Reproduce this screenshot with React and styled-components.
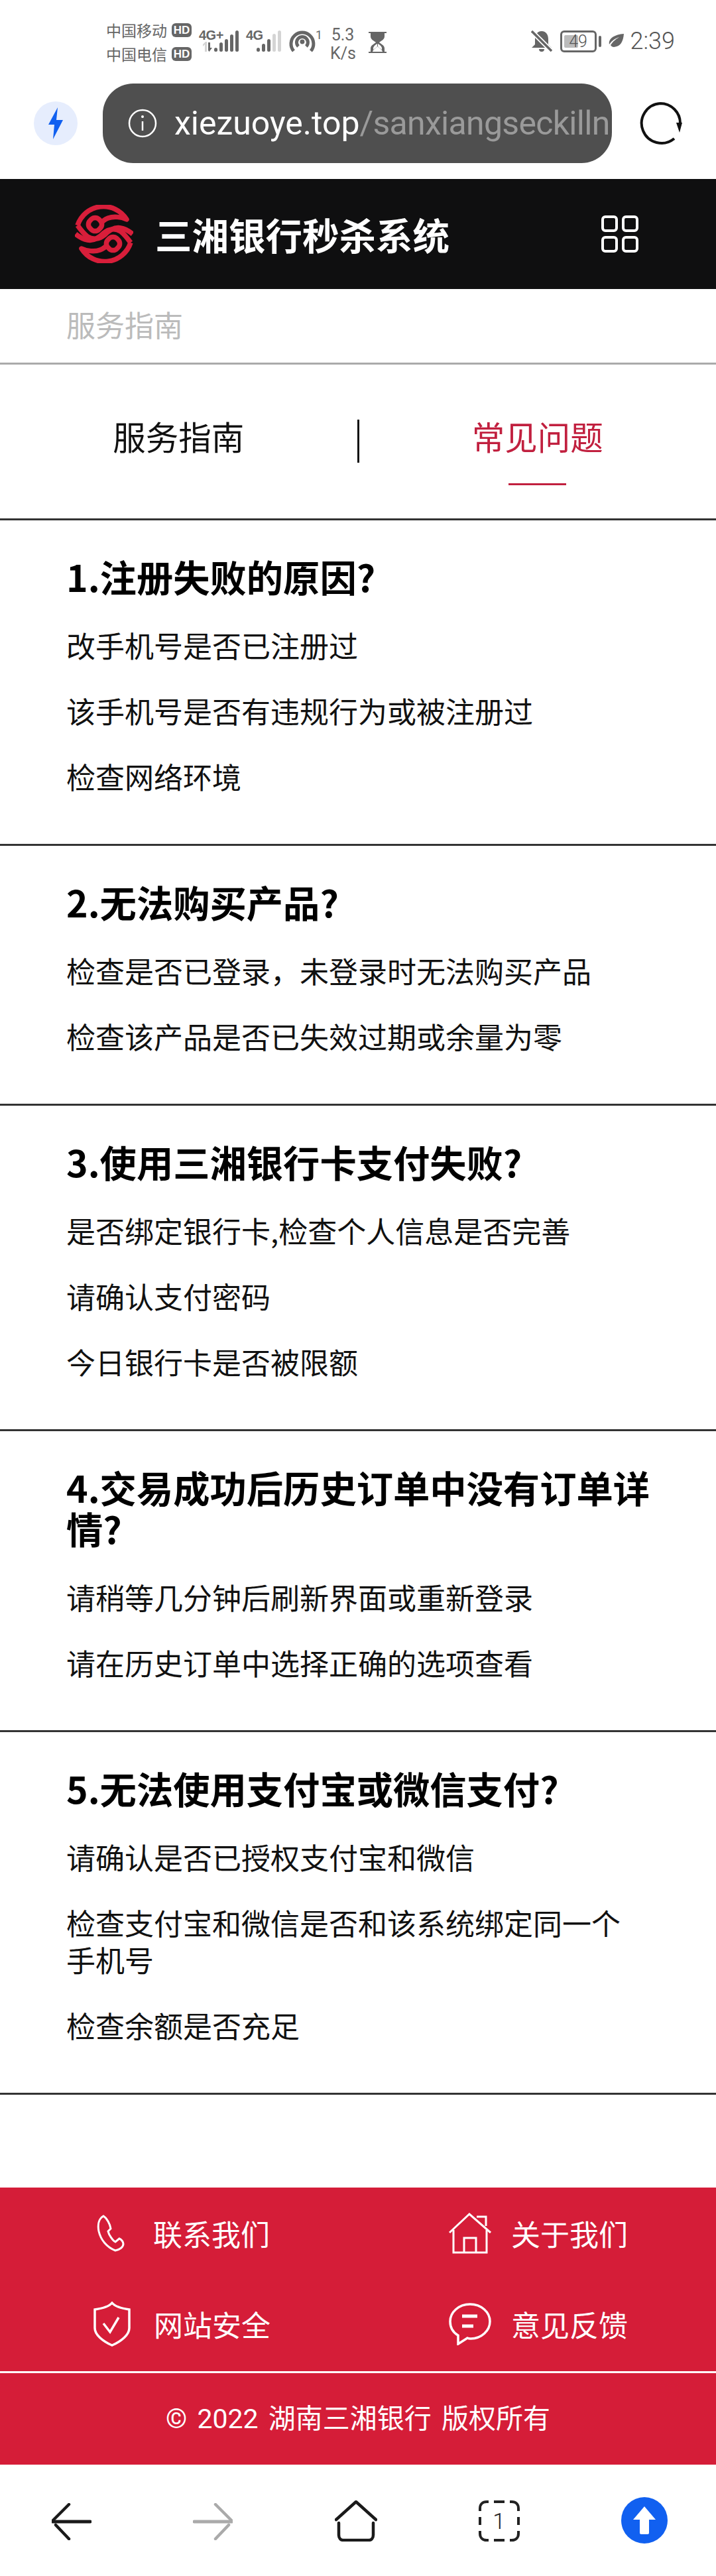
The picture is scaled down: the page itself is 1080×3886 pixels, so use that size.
import styled, { createGlobalStyle } from "styled-components";

const GlobalStyle = createGlobalStyle`
    html, body {
        margin: 0;
        padding: 0;
        background: #fff;
    }
    * {
        box-sizing: border-box;
    }
    body {
        font-family: "Noto Sans CJK SC", "Noto Sans", sans-serif;
    }
`

const Page = styled.div`
    width: 1080px;
    height: 3886px;
    display: flex;
    flex-direction: column;
    overflow: hidden;
`

/* phone status bar */
const StatusBar = styled.div`
    height: 108px;
    padding: 33px 62px 0 160px;
    display: flex;
    align-items: flex-start;
    color: #666;
    flex-shrink: 0;
`
const Carriers = styled.div`
    width: 140px;
    display: flex;
    flex-direction: column;
    gap: 12px;
    flex-shrink: 0;
`
const Carrier = styled.div`
    height: 24px;
    display: flex;
    align-items: center;
    gap: 7px;
    font-size: 23px;
    line-height: 24px;
    white-space: nowrap;
`
const HdBadge = styled.span`
    width: 30px;
    height: 21px;
    border-radius: 6px;
    background: #666;
    color: #fff;
    font-family: "Liberation Sans", sans-serif;
    font-size: 17px;
    font-weight: 700;
    line-height: 21px;
    text-align: center;
`
const Signal = styled.div`
    position: relative;
    width: ${(p) => p.$width}px;
    height: 33px;
    margin: 12px ${(p) => p.$gap}px 0 0;
    flex-shrink: 0;
`
const SignalLabel = styled.span`
    position: absolute;
    left: 0;
    top: -2px;
    font-family: "Liberation Sans Narrow", "Liberation Sans", sans-serif;
    font-size: 20px;
    font-weight: 700;
    line-height: 20px;
    letter-spacing: -0.5px;
`
const Bars = styled.div`
    position: absolute;
    right: 0;
    bottom: 0;
    display: flex;
    align-items: flex-end;
    gap: 3px;
`
const Bar = styled.i`
    display: block;
    width: 5px;
    height: ${(p) => p.$h}px;
    border-radius: 2.5px;
    background: ${(p) => (p.$off ? "#d4d4d4" : "#666")};
`
const Hotspot = styled.div`
    width: 50px;
    margin: 12px 12px 0 0;
    display: flex;
    flex-shrink: 0;
    font-family: "Roboto", sans-serif;
    font-size: 18px;
    line-height: 16px;
`
const Speed = styled.div`
    width: 38px;
    margin: 6px 20px 0 0;
    flex-shrink: 0;
    font-family: "Roboto", sans-serif;
    font-size: 25px;
    line-height: 28px;
    text-align: center;
    white-space: nowrap;
`
const StatusRight = styled.div`
    margin: 12px 0 0 auto;
    display: flex;
    align-items: center;
    height: 34px;
`
const Battery = styled.div`
    position: relative;
    width: 55px;
    height: 33px;
    margin: 0 4px 0 12px;
    border: 3px solid #666;
    border-radius: 6px;
    font-family: "Roboto", sans-serif;
    font-size: 25px;
    font-weight: 300;
    line-height: 27px;
    text-align: center;
    color: #555;
    &::before {
        content: "";
        position: absolute;
        left: 3px;
        top: 4px;
        width: 21px;
        height: 19px;
        border-radius: 2px;
        background: #bbb;
    }
    &::after {
        content: "";
        position: absolute;
        right: -10px;
        top: 5px;
        width: 4px;
        height: 17px;
        border-radius: 2px;
        background: #666;
    }
    span {
        position: relative;
    }
`
const Time = styled.div`
    margin-left: 9px;
    font-family: "Roboto", sans-serif;
    font-size: 36px;
    font-weight: 300;
    line-height: 34px;
    color: #555;
`

/* browser address row */
const AddressRow = styled.div`
    height: 162px;
    padding: 18px 51px 18px;
    display: flex;
    align-items: flex-start;
    flex-shrink: 0;
`
const FlashButton = styled.div`
    width: 66px;
    height: 66px;
    margin-top: 27px;
    border-radius: 50%;
    background: #e6edfd;
    display: flex;
    align-items: center;
    justify-content: center;
    flex-shrink: 0;
`
const UrlPill = styled.div`
    width: 768px;
    height: 120px;
    margin-left: 38px;
    padding: 0 22px 0 38px;
    border-radius: 46px;
    background: #4f4f4f;
    display: flex;
    align-items: center;
    flex-shrink: 0;
`
const UrlText = styled.div`
    margin-left: 26px;
    white-space: nowrap;
    font-family: "Roboto", sans-serif;
    font-size: 50px;
    line-height: 70px;
    color: #fff;
    span {
        color: #9a9a9a;
        letter-spacing: -0.7px;
    }
`
const ReloadButton = styled.div`
    width: 66px;
    height: 66px;
    margin: 27px 0 0 40px;
    flex-shrink: 0;
`

/* site header */
const SiteHeader = styled.header`
    height: 166px;
    padding: 39px 117px 0 113px;
    background: #0f0f10;
    display: flex;
    align-items: flex-start;
    flex-shrink: 0;
`
const SiteTitle = styled.h1`
    margin: 12px 0 0 33px;
    font-size: 55.5px;
    font-weight: 700;
    line-height: 64px;
    color: #fff;
    white-space: nowrap;
`
const MenuIcon = styled.div`
    margin: 16px 0 0 auto;
    display: grid;
    grid-template-columns: 25px 25px;
    grid-auto-rows: 25px;
    gap: 6px;
`
const MenuCell = styled.i`
    display: block;
    border: 4px solid #fff;
    border-radius: 6px;
`

const Crumb = styled.div`
    height: 114px;
    padding: 27px 0 0 100px;
    border-bottom: 3px solid #aaa;
    font-size: 44px;
    line-height: 52px;
    color: #bbb;
    flex-shrink: 0;
`

const Tabs = styled.nav`
    height: 235px;
    padding-top: 79px;
    display: flex;
    align-items: flex-start;
    border-bottom: 3px solid #333;
    flex-shrink: 0;
`
const Tab = styled.div`
    flex: 1;
    display: flex;
    flex-direction: column;
    align-items: center;
    font-size: 49.5px;
    line-height: 58px;
    color: ${(p) => (p.$active ? "#c1203f" : "#111")};
    &::after {
        content: "";
        display: ${(p) => (p.$active ? "block" : "none")};
        width: 87px;
        height: 3px;
        margin-top: 42px;
        background: #c1203f;
    }
`
const TabDivider = styled.div`
    width: 3px;
    height: 65px;
    margin-top: 4px;
    background: #111;
    flex-shrink: 0;
`

const Faq = styled.section`
    padding: 53px 80px 31px 100px;
    border-bottom: 3px solid #333;
    flex-shrink: 0;
`
const Question = styled.h2`
    margin: 0 0 45px;
    font-size: 55.3px;
    font-weight: 700;
    line-height: 62px;
    color: #000;
`
const Answer = styled.p`
    max-width: 860px;
    margin: 0 0 43px;
    font-size: 44px;
    font-weight: 400;
    line-height: 56px;
    color: #111;
`

const Spacer = styled.div`
    flex: 1;
`

const Footer = styled.footer`
    background: #d51d38;
    color: #fff;
    flex-shrink: 0;
`
const FooterGrid = styled.div`
    height: 280px;
    padding-top: 34px;
    display: grid;
    grid-template-columns: 540px 540px;
    grid-auto-rows: 105px;
    row-gap: 32px;
    border-bottom: 3px solid #fff;
`
const FooterLink = styled.a`
    height: 70px;
    padding-left: ${(p) => p.$left}px;
    display: flex;
    align-items: center;
    font-size: 44px;
    line-height: 60px;
    color: #fff;
`
const LinkIcon = styled.span`
    width: ${(p) => p.$width}px;
    display: flex;
    flex-shrink: 0;
`
const Copyright = styled.div`
    height: 138px;
    display: flex;
    align-items: center;
    justify-content: center;
    font-family: "Roboto", "Noto Sans CJK SC", sans-serif;
    font-size: 41px;
    line-height: 60px;
    word-spacing: 5px;
`

const BottomBar = styled.div`
    height: 168px;
    padding: 58px 73px 0 78px;
    display: flex;
    align-items: flex-start;
    justify-content: space-between;
    flex-shrink: 0;
`
const TabCount = styled.div`
    position: relative;
    width: 62px;
    height: 62px;
    margin-top: -4px;
    font-family: "Roboto", sans-serif;
    font-size: 34px;
    font-weight: 300;
    line-height: 62px;
    text-align: center;
    color: #222;
    svg {
        position: absolute;
        left: 0;
        top: 0;
    }
`

const LogoBand = () => (
    <g fill="none" stroke="#d81e3a" strokeWidth="7.5" strokeLinejoin="round">
        <path d="M4 31 A41 41 0 0 1 78 22 C70 18 58 17 50 20 C45 22 42 24 39 28" />
        <path d="M4 31 C9 38 14 44 19 48 C27 53 37 52 44 46 C52 38 60 33 69 35 C76 36 82 40 87 44" />
        <rect x="21" y="20" width="19" height="19" rx="8" transform="rotate(45 30.5 29.5)" />
    </g>
)

const Logo = () => (
    <svg width="88" height="88" viewBox="0 0 88 88">
        <LogoBand />
        <g transform="rotate(180 44 44)">
            <LogoBand />
        </g>
    </svg>
)

const faqs = [
    {
        q: "1.注册失败的原因?",
        a: ["改手机号是否已注册过", "该手机号是否有违规行为或被注册过", "检查网络环境"],
    },
    {
        q: "2.无法购买产品?",
        a: ["检查是否已登录，未登录时无法购买产品", "检查该产品是否已失效过期或余量为零"],
    },
    {
        q: "3.使用三湘银行卡支付失败?",
        a: ["是否绑定银行卡,检查个人信息是否完善", "请确认支付密码", "今日银行卡是否被限额"],
    },
    {
        q: "4.交易成功后历史订单中没有订单详情?",
        a: ["请稍等几分钟后刷新界面或重新登录", "请在历史订单中选择正确的选项查看"],
    },
    {
        q: "5.无法使用支付宝或微信支付?",
        a: ["请确认是否已授权支付宝和微信", "检查支付宝和微信是否和该系统绑定同一个手机号", "检查余额是否充足"],
    },
]

const App = () => {
    return (
        <Page>
            <GlobalStyle />
            <StatusBar>
                <Carriers>
                    <Carrier>中国移动<HdBadge>HD</HdBadge></Carrier>
                    <Carrier>中国电信<HdBadge>HD</HdBadge></Carrier>
                </Carriers>
                <Signal $width={60} $gap={11}>
                    <SignalLabel>4G+</SignalLabel>
                    <Bars>
                        <svg width="14" height="15" viewBox="0 0 14 15">
                            <path d="M3 15V4L0 7V4L4 0H6V15Z" fill="#d4d4d4" />
                            <path d="M8 1H11V9H14L9.5 15L8 13Z" fill="#666" />
                        </svg>
                        <Bar $h={6} />
                        <Bar $h={14} />
                        <Bar $h={19} />
                        <Bar $h={26} />
                        <Bar $h={32} />
                    </Bars>
                </Signal>
                <Signal $width={53} $gap={12}>
                    <SignalLabel>4G</SignalLabel>
                    <Bars>
                        <Bar $h={6} />
                        <Bar $h={12} />
                        <Bar $h={19} />
                        <Bar $h={27} $off />
                        <Bar $h={32} $off />
                    </Bars>
                </Signal>
                <Hotspot>
                    <svg width="40" height="34" viewBox="0 0 40 34" fill="none" stroke="#666" strokeWidth="5">
                        <path d="M7 32 A17 17 0 1 1 33 32" />
                        <path d="M14 25 A8.5 8.5 0 1 1 26 25" />
                        <circle cx="20" cy="18" r="3.5" fill="#666" stroke="none" />
                    </svg>
                    1
                </Hotspot>
                <Speed>5.3<br />K/s</Speed>
                <svg width="27" height="32" viewBox="0 0 27 32" style={{ marginTop: 15 }} fill="#666">
                    <path d="M0 0H27V2H24V7C24 12 18 14 16 16C18 18 24 20 24 25V30H27V32H0V30H3V25C3 20 9 18 11 16C9 14 3 12 3 7V2H0Z" />
                    <path d="M6 30C7 26 11 25 13.5 22C16 25 20 26 21 30Z" fill="#fff" />
                    <path d="M7 24C8 21 11 19 13 18V22C11 25 9 25 7 27Z" fill="#fff" />
                    <path d="M20 24C19 21 16 19 14 18V22C16 25 18 25 20 27Z" fill="#fff" />
                </svg>
                <StatusRight>
                    <svg width="32" height="34" viewBox="0 0 32 34">
                        <path d="M16 2C9 2 6 8 6 14V22L1 27H31L26 22V14C26 8 23 2 16 2Z" fill="#666" />
                        <path d="M12 29H20A4 4 0 0 1 12 29Z" fill="#666" />
                        <path d="M1 2L31 32" stroke="#fff" strokeWidth="7" />
                        <path d="M1 2L31 32" stroke="#666" strokeWidth="3.5" />
                    </svg>
                    <Battery><span>49</span></Battery>
                    <svg width="24" height="24" viewBox="0 0 24 24" style={{ marginLeft: 14 }}>
                        <path d="M23 1C22 13 18 20 8 21C6 21 4 20 3 18C7 12 11 9 16 6C10 8 5 11 1 17C-1 9 8 2 23 1Z" fill="#666" />
                    </svg>
                    <Time>2:39</Time>
                </StatusRight>
            </StatusBar>

            <AddressRow>
                <FlashButton>
                    <svg width="26" height="50" viewBox="0 0 26 50">
                        <path d="M16 1L2 27H11L9 49L24 20H14Z" fill="#1160f0" />
                    </svg>
                </FlashButton>
                <UrlPill>
                    <svg width="44" height="44" viewBox="0 0 44 44" fill="none" style={{ flexShrink: 0 }}>
                        <circle cx="22" cy="22" r="20" stroke="#fff" strokeWidth="2.5" />
                        <path d="M22 19V33" stroke="#fff" strokeWidth="2.5" />
                        <circle cx="22" cy="12" r="2" fill="#fff" />
                    </svg>
                    <UrlText>xiezuoye.top<span>/sanxiangseckilln</span></UrlText>
                </UrlPill>
                <ReloadButton>
                    <svg width="66" height="66" viewBox="0 0 66 66" fill="none">
                        <path d="M33 3A30 30 0 0 1 63 33M54 56A30 30 0 1 1 33 3" stroke="#111" strokeWidth="4" />
                        <path d="M57 32H66L62 47Z" fill="#111" />
                    </svg>
                </ReloadButton>
            </AddressRow>

            <SiteHeader>
                <Logo />
                <SiteTitle>三湘银行秒杀系统</SiteTitle>
                <MenuIcon>
                    <MenuCell />
                    <MenuCell />
                    <MenuCell />
                    <MenuCell />
                </MenuIcon>
            </SiteHeader>

            <Crumb>服务指南</Crumb>

            <Tabs>
                <Tab>服务指南</Tab>
                <TabDivider />
                <Tab $active>常见问题</Tab>
            </Tabs>

            {faqs.map((faq) => (
                <Faq key={faq.q}>
                    <Question>{faq.q}</Question>
                    {faq.a.map((line) => (
                        <Answer key={line}>{line}</Answer>
                    ))}
                </Faq>
            ))}

            <Spacer />

            <Footer>
                <FooterGrid>
                    <FooterLink $left={146}>
                        <LinkIcon $width={85}>
                            <svg width="54" height="56" viewBox="0 0 54 56" fill="none" stroke="#fff" strokeWidth="3">
                                <path d="M10 2C3 6 1 15 3 25C6 38 15 49 28 54C34 53 40 49 40 44C40 41 37 37 34 36L28 41C24 39 18 30 17 25L21 21C20 14 15 5 10 2Z" />
                            </svg>
                        </LinkIcon>
                        联系我们
                    </FooterLink>
                    <FooterLink $left={137}>
                        <LinkIcon $width={94}>
                            <svg width="64" height="62" viewBox="0 0 64 62" fill="none" stroke="#fff" strokeWidth="3">
                                <path d="M1 30L31 2L63 30" />
                                <path d="M7 26V60H57V26" />
                                <path d="M23 60V38H41V60" />
                                <path d="M42 6H56V20" />
                            </svg>
                        </LinkIcon>
                        关于我们
                    </FooterLink>
                    <FooterLink $left={141}>
                        <LinkIcon $width={91}>
                            <svg width="56" height="68" viewBox="0 0 56 68" fill="none" stroke="#fff" strokeWidth="3.5">
                                <path d="M28 2C24 7 16 10 2 12V40C2 50 14 60 28 66C42 60 54 50 54 40V12C40 10 32 7 28 2Z" />
                                <path d="M15 33L25 46L38 24" />
                            </svg>
                        </LinkIcon>
                        网站安全
                    </FooterLink>
                    <FooterLink $left={137}>
                        <LinkIcon $width={94}>
                            <svg width="64" height="64" viewBox="0 0 64 64" fill="none" stroke="#fff" strokeWidth="3.5">
                                <path d="M32 2C15 2 2 14 2 28C2 38 7 45 14 49V62L28 53C30 54 32 54 33 54C49 54 62 42 62 28C62 14 49 2 32 2Z" />
                                <path d="M20 20H43M20 35H37" strokeWidth="5" />
                            </svg>
                        </LinkIcon>
                        意见反馈
                    </FooterLink>
                </FooterGrid>
                <Copyright>© 2022 湖南三湘银行 版权所有</Copyright>
            </Footer>

            <BottomBar>
                <svg width="60" height="56" viewBox="0 0 60 56" fill="none" stroke="#1a1a1a" strokeWidth="4.5" strokeLinecap="round">
                    <path d="M1 28H58" strokeWidth="5" />
                    <path d="M2 26L26 2" />
                    <path d="M6 33L26 54" />
                </svg>
                <svg width="60" height="56" viewBox="0 0 60 56" fill="none" stroke="#aaa" strokeWidth="4.5" strokeLinecap="round">
                    <path d="M2 28H59" strokeWidth="5" />
                    <path d="M58 26L34 2" />
                    <path d="M54 33L34 54" />
                </svg>
                <svg width="64" height="62" viewBox="0 0 64 62" fill="none" stroke="#1a1a1a" strokeWidth="4.5" strokeLinejoin="round" strokeLinecap="round" style={{ marginTop: -4 }}>
                    <path d="M2 29L32 2L62 29" />
                    <path d="M6 34V52C6 57 9 60 13 60H51C55 60 58 57 58 52V34" />
                </svg>
                <TabCount>
                    <svg width="62" height="62" viewBox="0 0 62 62" fill="none" stroke="#222" strokeWidth="4">
                        <path d="M2 16V12C2 6 6 2 12 2H15" />
                        <path d="M47 2H50C56 2 60 6 60 12V16" />
                        <path d="M60 46V50C60 56 56 60 50 60H47" />
                        <path d="M15 60H12C6 60 2 56 2 50V46" />
                        <path d="M23 2H39M23 60H39M2 25V37M60 25V37" />
                    </svg>
                    1
                </TabCount>
                <svg width="70" height="70" viewBox="0 0 70 70" style={{ marginTop: -9 }}>
                    <circle cx="35" cy="35" r="35" fill="#1160f0" />
                    <path d="M35 14L52 34H42V54C42 55 41 56 40 56H30C29 56 28 55 28 54V34H18Z" fill="#fff" />
                </svg>
            </BottomBar>
        </Page>
    )
}
export default App
